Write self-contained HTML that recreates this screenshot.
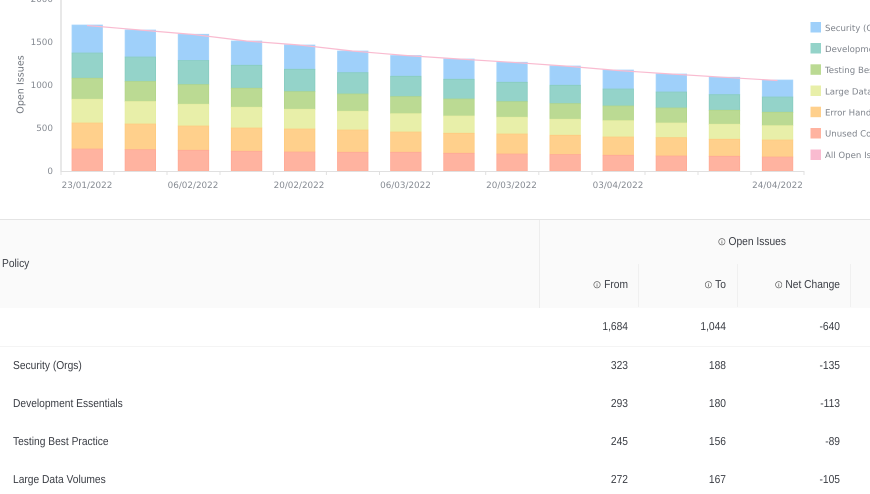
<!DOCTYPE html>
<html><head><meta charset="utf-8"><style>
html,body{margin:0;padding:0;background:#fff}
body{width:870px;height:494px;overflow:hidden;position:relative;font-family:"Liberation Sans",sans-serif;text-rendering:geometricPrecision}
#w{position:absolute;left:0;top:0;width:870px;height:494px;overflow:hidden;filter:blur(.3px)}
svg.c{position:absolute;left:0;top:0}
svg text{font-family:"DejaVu Sans",sans-serif;font-size:8.8px;fill:#858a92}
svg text.l{font-size:8.6px;fill:#7f848c}
.a{position:absolute}
.t{position:absolute;font-size:11.5px;line-height:16px;color:#3a3d44;white-space:nowrap;transform:scaleX(.89);transform-origin:0 50%}
.r{text-align:right;width:120px;transform-origin:100% 50%}
.i{display:inline-block;width:8.4px;height:7.5px;margin-right:3.4px;vertical-align:-.5px}
</style></head><body><div id="w">
<svg class="c" width="870" height="220" viewBox="0 0 870 220">
<g stroke-width=".8">
<path fill="#9fd0fa" stroke="#a8d5fb" d="M72 25H102.5V53H72ZM125.1 30H155.6V57H125.1ZM178.2 34.3H208.7V60.5H178.2ZM231.3 41H261.8V65.3H231.3ZM284.4 45H314.9V69.3H284.4ZM337.5 51H368V72.7H337.5ZM390.6 55.5H421.1V76.3H390.6ZM443.7 59H474.2V79.3H443.7ZM496.8 62.3H527.3V82.3H496.8ZM549.9 66H580.4V85.3H549.9ZM603 70H633.5V89H603ZM656.1 74H686.6V92H656.1ZM709.2 77.3H739.7V94.7H709.2ZM762.3 80H792.8V97H762.3Z"/>
<path fill="#94d3c9" stroke="#88ccc0" d="M72 53H102.5V78.3H72ZM125.1 57H155.6V81.5H125.1ZM178.2 60.5H208.7V84.7H178.2ZM231.3 65.3H261.8V88.3H231.3ZM284.4 69.3H314.9V91.7H284.4ZM337.5 72.7H368V94H337.5ZM390.6 76.3H421.1V96.7H390.6ZM443.7 79.3H474.2V99H443.7ZM496.8 82.3H527.3V101.7H496.8ZM549.9 85.3H580.4V103.7H549.9ZM603 89H633.5V106H603ZM656.1 92H686.6V108H656.1ZM709.2 94.7H739.7V110.3H709.2ZM762.3 97H792.8V112.3H762.3Z"/>
<path fill="#bbda93" stroke="#b4d68a" d="M72 78.3H102.5V99.3H72ZM125.1 81.5H155.6V101.5H125.1ZM178.2 84.7H208.7V104.3H178.2ZM231.3 88.3H261.8V107.3H231.3ZM284.4 91.7H314.9V109.3H284.4ZM337.5 94H368V111.3H337.5ZM390.6 96.7H421.1V113.7H390.6ZM443.7 99H474.2V116H443.7ZM496.8 101.7H527.3V117.3H496.8ZM549.9 103.7H580.4V119.3H549.9ZM603 106H633.5V120.7H603ZM656.1 108H686.6V123H656.1ZM709.2 110.3H739.7V124.3H709.2ZM762.3 112.3H792.8V125.7H762.3Z"/>
<path fill="#e8efa9" stroke="#e6eda2" d="M72 99.3H102.5V123H72ZM125.1 101.5H155.6V124H125.1ZM178.2 104.3H208.7V126H178.2ZM231.3 107.3H261.8V128H231.3ZM284.4 109.3H314.9V129H284.4ZM337.5 111.3H368V130H337.5ZM390.6 113.7H421.1V132H390.6ZM443.7 116H474.2V133.3H443.7ZM496.8 117.3H527.3V134H496.8ZM549.9 119.3H580.4V135.3H549.9ZM603 120.7H633.5V137H603ZM656.1 123H686.6V137.7H656.1ZM709.2 124.3H739.7V139.3H709.2ZM762.3 125.7H792.8V140H762.3Z"/>
<path fill="#ffd08c" stroke="#fecb80" d="M72 123H102.5V149H72ZM125.1 124H155.6V149.7H125.1ZM178.2 126H208.7V150.3H178.2ZM231.3 128H261.8V151.3H231.3ZM284.4 129H314.9V152H284.4ZM337.5 130H368V152.3H337.5ZM390.6 132H421.1V152.3H390.6ZM443.7 133.3H474.2V153.3H443.7ZM496.8 134H527.3V154H496.8ZM549.9 135.3H580.4V154.5H549.9ZM603 137H633.5V155.3H603ZM656.1 137.7H686.6V156H656.1ZM709.2 139.3H739.7V156.3H709.2ZM762.3 140H792.8V157H762.3Z"/>
<path fill="#ffb3a0" stroke="#ffaa96" d="M72 149H102.5V171H72ZM125.1 149.7H155.6V171H125.1ZM178.2 150.3H208.7V171H178.2ZM231.3 151.3H261.8V171H231.3ZM284.4 152H314.9V171H284.4ZM337.5 152.3H368V171H337.5ZM390.6 152.3H421.1V171H390.6ZM443.7 153.3H474.2V171H443.7ZM496.8 154H527.3V171H496.8ZM549.9 154.5H580.4V171H549.9ZM603 155.3H633.5V171H603ZM656.1 156H686.6V171H656.1ZM709.2 156.3H739.7V171H709.2ZM762.3 157H792.8V171H762.3Z"/>
</g>
<path fill="none" stroke="#f9bbd0" stroke-width="1.2" d="M87 25.5L140 30L193.5 34.5L246.5 41L299.5 45L352.5 51L406 55.5L459 59L512 62.3L565 66L618 70.5L671 74L724.5 77.3L777.5 80.5"/>
<path fill="none" stroke="#e8e8e8" stroke-width="2" d="M61 0V171.5"/>
<path fill="none" stroke="#e0e0e0" stroke-width="1" d="M60.5 171.5H804.5M61 171.5V175M114 171.5V175M167 171.5V175M220 171.5V175M273.3 171.5V175M326.4 171.5V175M379.5 171.5V175M432.6 171.5V175M485.7 171.5V175M538.8 171.5V175M592 171.5V175M645 171.5V175M698 171.5V175M751 171.5V175M804 171.5V175"/>
<g text-anchor="end">
<text x="53" y="2">2000</text>
<text x="53" y="45">1500</text>
<text x="53" y="88">1000</text>
<text x="53" y="131">500</text>
<text x="53" y="174">0</text>
</g>
<text transform="translate(23.5 84.5) rotate(-90)" text-anchor="middle" style="font-size:9.6px;fill:#70757d">Open Issues</text>
<g text-anchor="middle">
<text x="87" y="188">23/01/2022</text>
<text x="193" y="188">06/02/2022</text>
<text x="299" y="188">20/02/2022</text>
<text x="405.5" y="188">06/03/2022</text>
<text x="511.5" y="188">20/03/2022</text>
<text x="618" y="188">03/04/2022</text>
<text x="777.5" y="188">24/04/2022</text>
</g>
<rect x="810.5" y="22" width="10.5" height="10.5" fill="#9fd0fa"/>
<rect x="810.5" y="43" width="10.5" height="10.5" fill="#94d3c9"/>
<rect x="810.5" y="64.3" width="10.5" height="10.5" fill="#bbda93"/>
<rect x="810.5" y="85.5" width="10.5" height="10.5" fill="#e8efa9"/>
<rect x="810.5" y="106.7" width="10.5" height="10.5" fill="#ffd08c"/>
<rect x="810.5" y="128" width="10.5" height="10.5" fill="#ffb3a0"/>
<rect x="810.5" y="149.5" width="10.5" height="10.5" fill="#f9bbd0"/>
<text class="l" x="825" y="31">Security (Orgs)</text>
<text class="l" x="825" y="52">Development Essentials</text>
<text class="l" x="825" y="73">Testing Best Practice</text>
<text class="l" x="825" y="94.5">Large Data Volumes</text>
<text class="l" x="825" y="115.5">Error Handling</text>
<text class="l" x="825" y="136.5">Unused Code</text>
<text class="l" x="825" y="158">All Open Issues</text>
</svg>

<svg width="0" height="0" style="position:absolute"><defs><symbol id="n" viewBox="0 0 8 8" preserveAspectRatio="none"><circle cx="4" cy="4" r="3.4" fill="none" stroke="#555" stroke-width=".7"/><path d="M4 3.4V6M4 2V2.7" stroke="#555" stroke-width=".8" fill="none"/></symbol></defs></svg>

<div class="a" style="left:0;top:219px;width:870px;height:1.5px;background:#e4e4e4"></div>
<div class="a" style="left:0;top:220px;width:870px;height:88px;background:#fafafa"></div>
<div class="a" style="left:539px;top:220px;width:1px;height:88px;background:#ededed"></div>
<div class="a" style="left:638px;top:264px;width:1px;height:43px;background:#f0f0f0"></div>
<div class="a" style="left:737px;top:264px;width:1px;height:43px;background:#f0f0f0"></div>
<div class="a" style="left:850px;top:264px;width:1px;height:43px;background:#f0f0f0"></div>
<div class="a" style="left:0;top:346px;width:870px;height:1px;background:#f4f4f4"></div>

<div class="t" style="left:2px;top:256px">Policy</div>
<div class="t r" style="left:692px;top:234px;text-align:center;transform-origin:50% 50%"><svg class="i"><use href="#n"/></svg>Open Issues</div>
<div class="t r" style="left:507.5px;top:277px"><svg class="i"><use href="#n"/></svg>From</div>
<div class="t r" style="left:606px;top:277px"><svg class="i"><use href="#n"/></svg>To</div>
<div class="t r" style="left:719.5px;top:277px"><svg class="i"><use href="#n"/></svg>Net Change</div>

<div class="t r" style="left:507.5px;top:319px">1,684</div>
<div class="t r" style="left:606px;top:319px">1,044</div>
<div class="t r" style="left:719.5px;top:319px">-640</div>

<div class="t" style="left:13px;top:358px">Security (Orgs)</div>
<div class="t r" style="left:507.5px;top:358px">323</div>
<div class="t r" style="left:606px;top:358px">188</div>
<div class="t r" style="left:719.5px;top:358px">-135</div>

<div class="t" style="left:13px;top:396px">Development Essentials</div>
<div class="t r" style="left:507.5px;top:396px">293</div>
<div class="t r" style="left:606px;top:396px">180</div>
<div class="t r" style="left:719.5px;top:396px">-113</div>

<div class="t" style="left:13px;top:434px">Testing Best Practice</div>
<div class="t r" style="left:507.5px;top:434px">245</div>
<div class="t r" style="left:606px;top:434px">156</div>
<div class="t r" style="left:719.5px;top:434px">-89</div>

<div class="t" style="left:13px;top:472px">Large Data Volumes</div>
<div class="t r" style="left:507.5px;top:472px">272</div>
<div class="t r" style="left:606px;top:472px">167</div>
<div class="t r" style="left:719.5px;top:472px">-105</div>
</div></body></html>
